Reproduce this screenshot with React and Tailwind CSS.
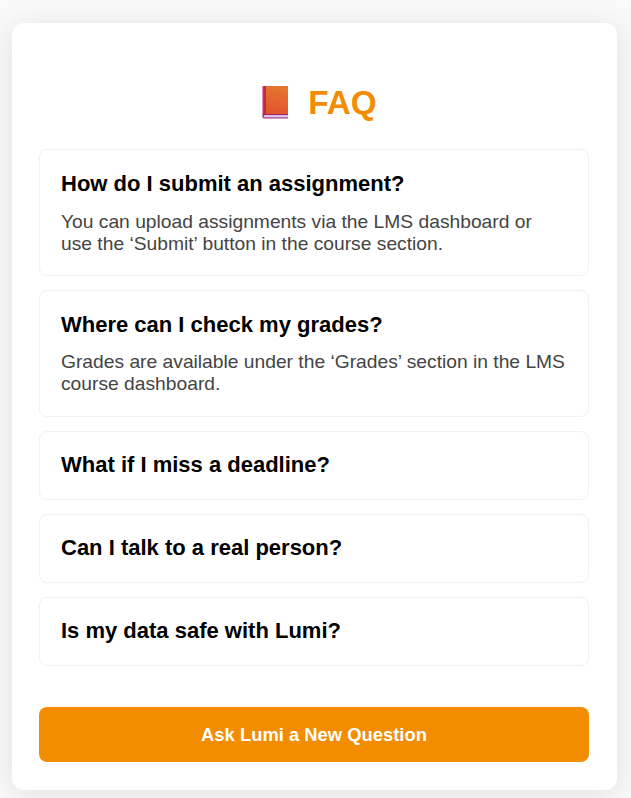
const faqs = [
  {
    q: "How do I submit an assignment?",
    a: ["You can upload assignments via the LMS dashboard or", "use the ‘Submit’ button in the course section."],
    gap: "mt-[14px]",
  },
  {
    q: "Where can I check my grades?",
    a: ["Grades are available under the ‘Grades’ section in the LMS", "course dashboard."],
    gap: "mt-[13px] mb-px",
  },
  { q: "What if I miss a deadline?" },
  { q: "Can I talk to a real person?" },
  { q: "Is my data safe with Lumi?" },
];

function BookIcon() {
  return (
    <svg width="27" height="34" viewBox="0 0 27 34" className="mt-px shrink-0">
      <defs>
        <linearGradient id="cover" x1="0.6" y1="0" x2="0.4" y2="1">
          <stop offset="0" stopColor="#e5772f" />
          <stop offset="1" stopColor="#e3532f" />
        </linearGradient>
        <linearGradient id="spine" x1="1" y1="0" x2="5" y2="0" gradientUnits="userSpaceOnUse">
          <stop offset="0" stopColor="#dc7c97" />
          <stop offset="0.4" stopColor="#c52b58" />
          <stop offset="1" stopColor="#bd2350" />
        </linearGradient>
      </defs>
      <path d="M2.3 0H27V29H4L2.3 31Q1.3 30.5 1.3 29V1Q1.3 0 2.3 0Z" fill="url(#spine)" />
      <path d="M5 0H27V28H5Z" fill="url(#cover)" />
      <path d="M3 28H27V32.5H3Q1.5 32.5 1.5 30.2T3 28Z" fill="#98246f" />
      <path d="M3.3 29H27V31.5H3.3Q2.6 31.5 2.6 30.2T3.3 29Z" fill="#dcc0e8" />
    </svg>
  );
}

export default function App() {
  return (
    <div className="h-[798px] w-full overflow-hidden bg-[#f9f9f9] pt-[23px] pl-3 font-['Liberation_Sans',Arial,sans-serif]">
      <main className="h-[767px] w-[605px] rounded-[12px] bg-white px-[27px] pt-[58px] shadow-[0_4px_30px_rgba(0,0,0,0.1)]">
        <h1 className="mb-[26px] flex h-[42px] items-center justify-center pl-[9px] text-[33.3px] font-bold text-[#f28c00]">
          <BookIcon />
          <span className="mt-[2px] ml-5">FAQ</span>
        </h1>
        <div className="flex w-[550px] flex-col gap-[14px]">
          {faqs.map(({ q, a, gap }) => (
            <section
              key={q}
              className={`rounded-[8px] border border-[#f2f2f2] px-[21px] ${a ? "pt-[21px] pb-[20px]" : "pt-[20px] pb-[21px]"}`}
            >
              <h2 className="text-[22px] leading-[26px] font-bold text-black">{q}</h2>
              {a && (
                <p className={`${gap} text-[19.24px] leading-[22px] whitespace-nowrap text-[#444]`}>
                  {a[0]}
                  <br />
                  {a[1]}
                </p>
              )}
            </section>
          ))}
        </div>
        <button className="mt-[41px] h-[55px] w-[550px] rounded-[8px] bg-[#f28c00] text-[18.4px] font-bold text-white">
          Ask Lumi a New Question
        </button>
      </main>
    </div>
  );
}
